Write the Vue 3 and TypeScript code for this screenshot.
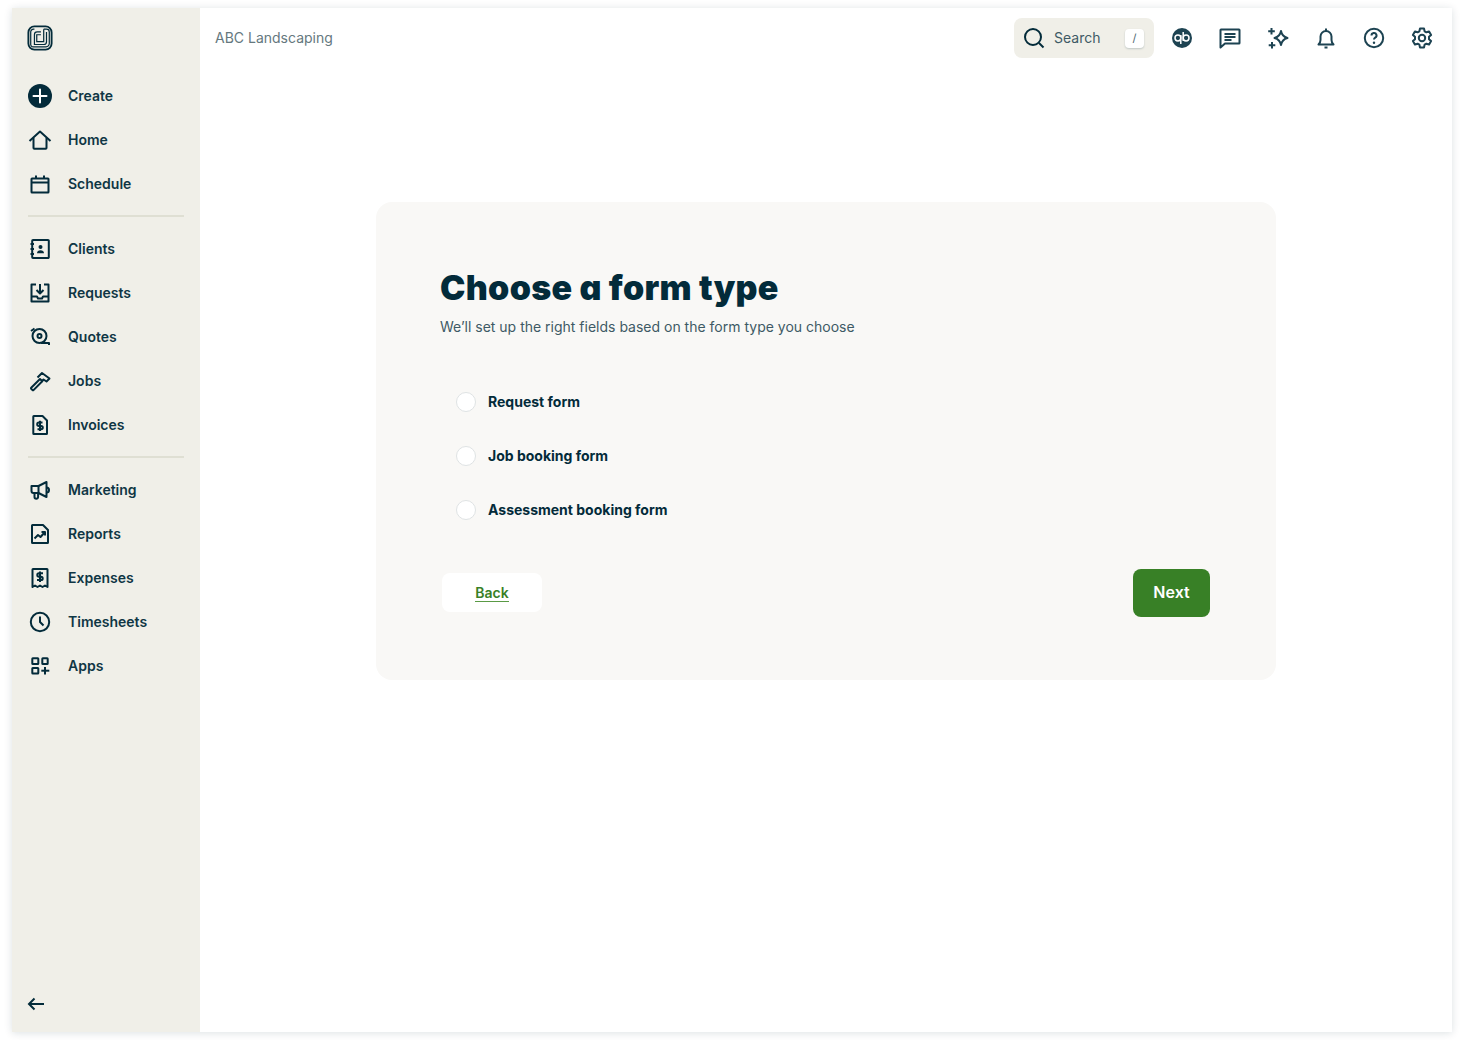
<script setup lang="ts">
interface NavItem {
  label: string
  icon: string
}

const mainNav: NavItem[] = [
  { label: 'Home', icon: 'home' },
  { label: 'Schedule', icon: 'schedule' },
]
const workNav: NavItem[] = [
  { label: 'Clients', icon: 'clients' },
  { label: 'Requests', icon: 'requests' },
  { label: 'Quotes', icon: 'quotes' },
  { label: 'Jobs', icon: 'jobs' },
  { label: 'Invoices', icon: 'invoices' },
]
const toolNav: NavItem[] = [
  { label: 'Marketing', icon: 'marketing' },
  { label: 'Reports', icon: 'reports' },
  { label: 'Expenses', icon: 'expenses' },
  { label: 'Timesheets', icon: 'timesheets' },
  { label: 'Apps', icon: 'apps' },
]
const navGroups = [mainNav, workNav, toolNav]

const formTypes = ['Request form', 'Job booking form', 'Assessment booking form']

const iconPaths: Record<string, string[]> = {
  home: ['M1.500 13 12 3.500 22.500 13', 'M5.500 10v10c0 .5.3.8.8.8h11.400c.5 0 .8-.3.8-.8V10'],
  schedule: ['M4 6.500h16a.5.5 0 0 1 .5.5v13a.5.5 0 0 1-.5.5H4a.5.5 0 0 1-.5-.5V7a.5.5 0 0 1 .5-.5Z', 'M3.500 10.500h17', 'M8 3.500v3', 'M16 3.500v3'],
  clients: ['M5 3h15a.8.8 0 0 1 .8.8v16.400a.8.8 0 0 1-.8.8H5a.8.8 0 0 1-.8-.8V3.800A.8.8 0 0 1 5 3Z', 'M2.500 7h3.500', 'M2.500 12h3.500', 'M2.500 17h3.500'],
  requests: ['M8 3.500H3.500v17h17v-17H16', 'M12 3v9', 'M8.500 9 12 12.500 15.500 9', 'M3.500 15.500H9l1 2h4l1-2h5.500'],
  quotes: ['M4.500 11a7 7 0 1 0 14 0 7 7 0 0 0-14 0Z', 'M9.500 11a2 2 0 1 0 4 0 2 2 0 0 0-4 0Z', 'M13 18h8v2', 'M3 6l3.500-2.500'],
  jobs: ['M3.200 18.800l8.800-8.800 2.300 2.300-8.800 8.800a.7.7 0 0 1-1 0l-1.300-1.300a.7.7 0 0 1 0-1Z', 'M9.500 8.500 14 4l7.500 5.500-3 3-3-2-1.500 1.500'],
  invoices: ['M5.800 3h8.700l4.500 4.500v13a.5.5 0 0 1-.5.5H5.800a.5.5 0 0 1-.5-.5v-17a.5.5 0 0 1 .5-.5Z', 'M14.500 9.500h-3.600a1.700 1.700 0 0 0 0 3.400h2.200a1.700 1.700 0 0 1 0 3.400H9.500', 'M12 7.800v10.200'],
  marketing: ['M3.500 8h7v7h-5a2 2 0 0 1-2-2V8Z', 'M10.500 8 18.500 4v15l-8-4', 'M18.500 9.500a2.500 2.500 0 0 1 0 5', 'M6.500 15v4a1.800 1.800 0 0 0 3.600 0v-4'],
  reports: ['M4.500 3h10.500l5 5v12.500a.5.5 0 0 1-.5.5h-15a.5.5 0 0 1-.5-.5v-17a.5.5 0 0 1 .5-.5Z', 'M6.500 16.500 10 13l2.500 2 4.500-5', 'M13.500 10H17v3.500'],
  expenses: ['M5 3h14a.5.5 0 0 1 .5.5V21l-2.500-1.500L14.500 21 12 19.500 9.500 21 7 19.500 4.500 21V3.500A.5.5 0 0 1 5 3Z', 'M15 7.300h-4a1.700 1.700 0 0 0 0 3.400h2a1.700 1.700 0 0 1 0 3.400H9', 'M12 5.500v10.500'],
  timesheets: ['M2.800 12a9.200 9.200 0 1 0 18.400 0 9.200 9.200 0 0 0-18.400 0Z', 'M12 6.500V12l3.500 3.500'],
  apps: ['M4.800 4.300h5a.5.5 0 0 1 .5.5v4.700a.5.5 0 0 1-.5.5h-5a.5.5 0 0 1-.5-.5V4.800a.5.5 0 0 1 .5-.5Z', 'M14.800 4.300h4.400a.5.5 0 0 1 .5.5v4.700a.5.5 0 0 1-.5.5h-4.400a.5.5 0 0 1-.5-.5V4.800a.5.5 0 0 1 .5-.5Z', 'M4.800 14h5a.5.5 0 0 1 .5.5V19a.5.5 0 0 1-.5.5h-5a.5.5 0 0 1-.5-.5v-4.500a.5.5 0 0 1 .5-.5Z', 'M17 13v7.500', 'M13.300 16.700h8'],
}
</script>

<template>
  <div class="frame">
    <aside class="sidebar">
      <svg class="logo" width="26" height="26" viewBox="0 0 28 28" fill="none" stroke="#032b3a" stroke-width="1.300">
        <rect x="1.500" y="1.500" width="25" height="25" rx="6.500" stroke-width="2" />
        <path d="M8 4.500H7a3 3 0 0 0-3 3V21a2.500 2.500 0 0 0 2.500 2.500H20.500A3.500 3.500 0 0 0 24 20V7.500a3 3 0 0 0-3-3h-3" />
        <path d="M18 4.500v13.500H10.500V10.500H15" />
        <path d="M15 7.500h-4a3 3 0 0 0-3 3V21h10a3 3 0 0 0 3-3V7.500" />
      </svg>

      <nav class="nav">
        <a class="nav-item">
          <svg class="nav-icon" width="24" height="24" viewBox="0 0 24 24" fill="none">
            <circle cx="12" cy="12" r="12" fill="#032b3a" />
            <path d="M12 5.500v13M5.500 12h13" stroke="#fff" stroke-width="2" stroke-linecap="round" />
          </svg>
          <span class="nav-label">Create</span>
        </a>
        <template v-for="(group, i) in navGroups" :key="i">
          <hr v-if="i > 0" class="divider" />
          <a v-for="item in group" :key="item.label" class="nav-item">
            <svg class="nav-icon" width="24" height="24" viewBox="0 0 24 24" fill="none" stroke="#032b3a" stroke-width="2" stroke-linejoin="round">
              <path v-for="d in iconPaths[item.icon]" :key="d" :d="d" />
              <template v-if="item.icon === 'clients'">
                <circle cx="12.500" cy="10" r="2" fill="#032b3a" stroke="none" />
                <path d="M9 16.200c0-2 1.500-3 3.500-3s3.500 1 3.500 3Z" fill="#032b3a" stroke="none" />
              </template>
            </svg>
            <span class="nav-label">{{ item.label }}</span>
          </a>
        </template>
      </nav>

      <svg class="collapse" width="18" height="14" viewBox="0 0 18 14" fill="none" stroke="#032b3a" stroke-width="2">
        <path d="M17 7H2M7.500 1.500 2 7l5.500 5.500" />
      </svg>
    </aside>

    <main class="main">
      <header class="topbar">
        <span class="account">ABC Landscaping</span>
        <div class="top-actions">
          <div class="search">
            <svg width="24" height="24" viewBox="0 0 24 24" fill="none" stroke="#032b3a" stroke-width="2">
              <circle cx="11" cy="11" r="8" />
              <path d="m17 17 4.500 4.500" />
            </svg>
            <span class="search-label">Search</span>
            <kbd class="search-key">/</kbd>
          </div>

          <span class="top-icon">
            <svg width="24" height="24" viewBox="0 0 24 24" fill="none">
              <circle cx="12" cy="12" r="10" fill="#1d4352" />
              <circle cx="7.900" cy="12" r="2.900" stroke="#fff" stroke-width="1.500" />
              <circle cx="16.100" cy="12" r="2.900" stroke="#fff" stroke-width="1.500" />
              <path d="M10.800 9v9M13.200 15V6" stroke="#fff" stroke-width="1.500" />
            </svg>
          </span>
          <span class="top-icon">
            <svg width="24" height="24" viewBox="0 0 24 24" fill="none" stroke="#1d4352" stroke-width="2" stroke-linejoin="round">
              <path d="M3 3.500h18a.5.500 0 0 1 .5.500v13a.5.500 0 0 1-.5.500H7L2.500 21.500V4a.5.500 0 0 1 .5-.5Z" />
              <path d="M6.500 8h11M6.500 11h11M6.500 14h7" />
            </svg>
          </span>
          <span class="top-icon">
            <svg width="24" height="24" viewBox="0 0 24 24" fill="none" stroke="#1d4352" stroke-width="2" stroke-linejoin="round">
              <path d="M15 5c.7 3.800 2.700 6 6.500 7-3.800 1-5.800 3.200-6.500 7-.7-3.800-2.700-6-6.500-7 3.800-1 5.800-3.200 6.500-7Z" />
              <path d="M5.500 2v6.500M2.200 5.200h6.600M6 16v6.500M2.700 19.200h6.600" />
            </svg>
          </span>
          <span class="top-icon">
            <svg width="24" height="24" viewBox="0 0 24 24" fill="none" stroke="#1d4352" stroke-width="2" stroke-linejoin="round">
              <path d="M4.500 18.500h15c-1.500-1.500-2-2.500-2-4.500v-3.500a5.500 5.500 0 0 0-11 0V14c0 2-.5 3-2 4.500Z" />
              <path d="M12 2.500v2.500M10.500 21.500h3" />
            </svg>
          </span>
          <span class="top-icon">
            <svg width="24" height="24" viewBox="0 0 24 24" fill="none" stroke="#1d4352" stroke-width="2">
              <circle cx="12" cy="12" r="9.200" />
              <path d="M9.500 9.500a2.500 2.500 0 1 1 3.700 2.200c-.8.500-1.200 1-1.200 1.800" />
              <circle cx="12" cy="16.800" r="1.200" fill="#1d4352" stroke="none" />
            </svg>
          </span>
          <span class="top-icon">
            <svg width="24" height="24" viewBox="0 0 24 24" fill="none" stroke="#1d4352" stroke-width="2" stroke-linejoin="round">
              <circle cx="12" cy="12" r="3.200" />
              <path d="M10 2.500h4l.6 2.800 1.800 1 2.700-.9 2 3.500-2.100 1.900v2.400l2.100 1.900-2 3.500-2.700-.9-1.800 1-.6 2.800h-4l-.6-2.800-1.800-1-2.700.9-2-3.500 2.100-1.900v-2.400L2.900 8.900l2-3.500 2.700.9 1.800-1Z" />
            </svg>
          </span>
        </div>
      </header>

      <section class="card">
        <h1 class="title">Choose a form type</h1>
        <p class="subtitle">We’ll set up the right fields based on the form type you choose</p>

        <div class="options">
          <label v-for="name in formTypes" :key="name" class="option">
            <span class="radio"></span>
            <span class="option-label">{{ name }}</span>
          </label>
        </div>

        <div class="actions">
          <button class="btn-back" type="button"><span>Back</span></button>
          <button class="btn-next" type="button">Next</button>
        </div>
      </section>
    </main>
  </div>
</template>

<style>
html,
body {
  margin: 0;
  background: #fff;
}
</style>

<style scoped>
.frame {
  display: flex;
  width: 1440px;
  height: 1024px;
  margin: 8px 12px;
  background: #fff;
  box-shadow: 0 1px 8px rgba(3, 43, 58, 0.14);
  font-family: Inter, "Liberation Sans", sans-serif;
  color: #032b3a;
}

.sidebar {
  display: flex;
  flex-direction: column;
  flex: 0 0 188px;
  box-sizing: border-box;
  padding: 16px 16px 21px;
  background: #f0efe8;
}

.logo {
  display: block;
  margin: 1px 0 1px -1px;
}

.nav {
  display: flex;
  flex-direction: column;
  margin-top: 22px;
  flex: 1;
}

.nav-item {
  display: flex;
  align-items: center;
  gap: 16px;
  height: 44px;
  font-size: 14px;
  font-weight: 600;
  color: #0f3644;
}

.nav-label {
  padding-bottom: 2px;
}

.nav-icon {
  flex: none;
}

.divider {
  width: 156px;
  height: 2px;
  margin: 9px 0 10px;
  border: 0;
  background: #dfdfd3;
}

.collapse {
  display: block;
  margin-left: -1px;
}

.main {
  flex: 1;
  min-width: 0;
}

.topbar {
  display: flex;
  align-items: center;
  justify-content: space-between;
  height: 60px;
  padding: 0 6px 0 15px;
}

.account {
  padding-bottom: 2px;
  font-size: 14px;
  color: #65787e;
}

.top-actions {
  display: flex;
  align-items: center;
}

.search {
  display: flex;
  align-items: center;
  box-sizing: border-box;
  width: 140px;
  height: 40px;
  margin-right: 4px;
  padding: 0 10px 0 8px;
  border-radius: 8px;
  background: #f0efe8;
}

.search-label {
  flex: 1;
  margin-left: 8px;
  padding-bottom: 2px;
  font-size: 14px;
  color: #3e5a65;
}

.search-key {
  display: flex;
  align-items: center;
  justify-content: center;
  width: 19px;
  height: 19px;
  border-radius: 4px;
  background: #fff;
  box-shadow: 0 1px 2px rgba(3, 43, 58, 0.2);
  font-family: Inter, sans-serif;
  font-size: 11px;
  color: #4c6570;
}

.top-icon {
  display: flex;
  align-items: center;
  justify-content: center;
  width: 48px;
  height: 40px;
}

.card {
  box-sizing: border-box;
  width: 900px;
  height: 478px;
  margin: 134px auto 0;
  padding: 64px;
  border-radius: 16px;
  background: #f9f8f6;
}

.title {
  margin: 0;
  font-family: Inter, sans-serif;
  font-size: 34px;
  line-height: 44px;
  font-weight: 900;
  font-feature-settings: "cv11";
  letter-spacing: 0.3px;
  color: #032b3a;
}

.subtitle {
  margin: 7px 0 0;
  font-size: 14px;
  line-height: 20px;
  color: #3e5a65;
}

.options {
  display: flex;
  flex-direction: column;
  gap: 34px;
  margin: 55px 0 0 16px;
}

.option {
  display: flex;
  align-items: center;
  gap: 12px;
  height: 20px;
  font-size: 14px;
  font-weight: 700;
  color: #032b3a;
}

.option-label {
  padding-bottom: 2px;
}

.radio {
  box-sizing: border-box;
  width: 20px;
  height: 20px;
  border: 1px solid #dfe3e4;
  border-radius: 50%;
  background: #fff;
}

.actions {
  display: flex;
  align-items: center;
  justify-content: space-between;
  margin: 48.5px 2px 0;
}

.btn-back {
  width: 100px;
  height: 39.500px;
  padding: 0;
  border: 0;
  border-radius: 8px;
  background: #fff;
  font-family: Inter, sans-serif;
  font-size: 14px;
  font-weight: 600;
  color: #388026;
}

.btn-back span {
  border-bottom: 1px solid #5a9a45;
}

.btn-next {
  width: 77px;
  height: 48px;
  padding: 0 0 1px;
  border: 0;
  border-radius: 8px;
  background: #388026;
  font-family: Inter, sans-serif;
  font-size: 16px;
  font-weight: 600;
  color: #fff;
}
</style>
